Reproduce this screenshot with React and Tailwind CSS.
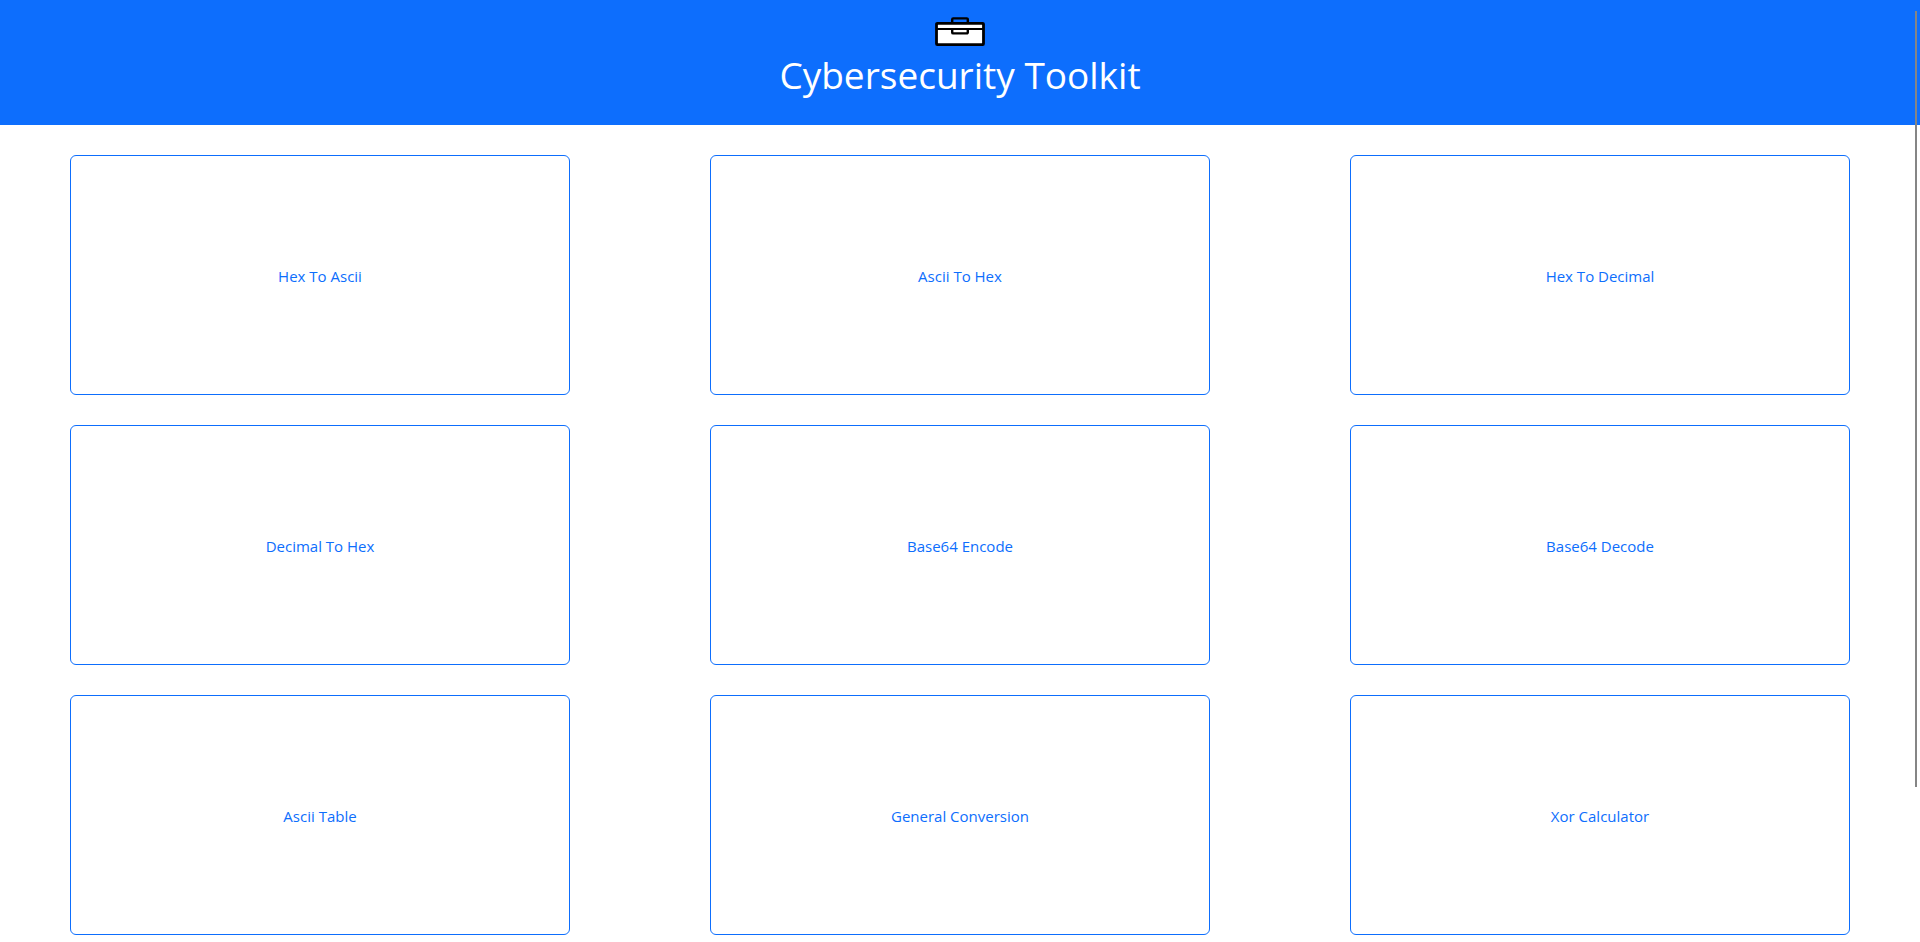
const tools = [
  'Hex To Ascii',
  'Ascii To Hex',
  'Hex To Decimal',
  'Decimal To Hex',
  'Base64 Encode',
  'Base64 Decode',
  'Ascii Table',
  'General Conversion',
  'Xor Calculator',
];

function ToolboxIcon() {
  return (
    <svg className="h-8 w-[50px]" viewBox="0 0 50 32" fill="none" aria-hidden="true">
      <path d="M17.2 7V3.4a1 1 0 0 1 1-1h13.6a1 1 0 0 1 1 1V7" stroke="#000" strokeWidth="2.4" />
      <rect x="1.5" y="7.3" width="47" height="21.3" rx="0.8" fill="#fff" stroke="#000" strokeWidth="2.8" />
      <path d="M2 13.1H48" stroke="#000" strokeWidth="2" />
      <path d="M17.2 13V16.4a1 1 0 0 0 1 1h13.6a1 1 0 0 0 1-1V13" stroke="#000" strokeWidth="2.4" />
    </svg>
  );
}

export default function App() {
  return (
    <div className="bg-white font-['Open_Sans','Noto_Sans',sans-serif]">
      <header className="flex flex-col items-center bg-[#0d6efd] pt-4 pb-6">
        <ToolboxIcon />
        <h1 className="text-[37px] leading-[53px] font-normal text-white">Cybersecurity Toolkit</h1>
      </header>
      <main className="grid grid-cols-3 gap-y-[30px] pt-[30px]">
        {tools.map((tool) => (
          <button
            key={tool}
            type="button"
            className="mx-auto h-60 w-[500px] max-w-[90%] rounded-md border border-[#0d6efd] bg-white pt-0.5 text-[15px] leading-6 text-[#0d6efd]"
          >
            {tool}
          </button>
        ))}
      </main>
      <div className="fixed top-[11px] right-[3px] h-[82.4vh] w-0.5 bg-[#858585]" aria-hidden="true" />
    </div>
  );
}
